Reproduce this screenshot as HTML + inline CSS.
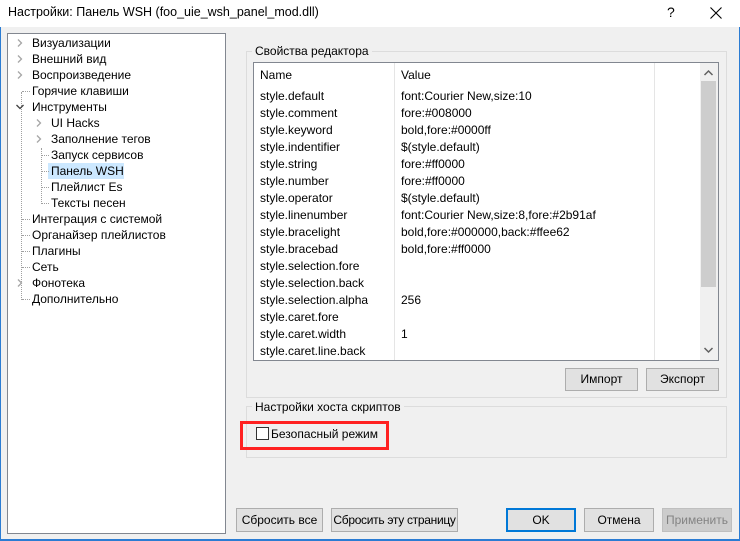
<!DOCTYPE html>
<html style="overflow:hidden;height:541px"><head><meta charset="utf-8"><style>
*{margin:0;padding:0;box-sizing:border-box}
body{width:740px;height:541px;background:#f0f0f0;font-family:"Liberation Sans",sans-serif;font-size:12px;color:#000;position:relative;overflow:hidden}
.a{position:absolute;white-space:nowrap}
.t{position:absolute;white-space:nowrap;line-height:16px}
.btn{position:absolute;background:#e1e1e1;border:1px solid #adadad;text-align:center;line-height:21px;white-space:nowrap;overflow:hidden}
.gb{position:absolute;border:1px solid #dcdcdc}
.row{position:absolute;left:260px;line-height:17px;white-space:nowrap}
.val{position:absolute;left:401px;line-height:17px;white-space:nowrap}
</style></head><body>
<div class="a" style="left:0;top:0;width:740px;height:27px;background:#fff"></div>
<div class="a" style="left:8px;top:5px;font-size:12.5px">Настройки: Панель WSH (foo_uie_wsh_panel_mod.dll)</div>
<div class="a" style="left:667px;top:4px;font-size:14px">?</div>
<svg class="a" style="left:710px;top:7px" width="12" height="12"><path d="M0.5 0.5L11.5 11.5M11.5 0.5L0.5 11.5" stroke="#000" stroke-width="1.1"/></svg>
<div class="a" style="left:0;top:27px;width:1px;height:514px;background:#2b7cd3"></div>
<div class="a" style="left:0;top:539px;width:740px;height:2px;background:#2b7cd3"></div>
<div class="a" style="left:739px;top:27px;width:1px;height:514px;background:#2b7cd3"></div>

<!-- tree -->
<div class="a" style="left:7px;top:33px;width:219px;height:501px;background:#fff;border:1px solid #828790"></div>
<div class="a" style="left:48px;top:163px;width:76px;height:16px;background:#cce8ff"></div>
<div class="a" style="left:21px;top:92px;height:208px;border-left:1px dotted #a0a0a0"></div>
<div class="a" style="left:41px;top:148px;height:56px;border-left:1px dotted #a0a0a0"></div>
<div class="a" style="left:22px;top:91px;width:8px;border-top:1px dotted #a0a0a0"></div>
<div class="a" style="left:22px;top:219px;width:8px;border-top:1px dotted #a0a0a0"></div>
<div class="a" style="left:22px;top:235px;width:8px;border-top:1px dotted #a0a0a0"></div>
<div class="a" style="left:22px;top:251px;width:8px;border-top:1px dotted #a0a0a0"></div>
<div class="a" style="left:22px;top:267px;width:8px;border-top:1px dotted #a0a0a0"></div>
<div class="a" style="left:22px;top:299px;width:8px;border-top:1px dotted #a0a0a0"></div>
<div class="a" style="left:42px;top:155px;width:7px;border-top:1px dotted #a0a0a0"></div>
<div class="a" style="left:42px;top:171px;width:7px;border-top:1px dotted #a0a0a0"></div>
<div class="a" style="left:42px;top:187px;width:7px;border-top:1px dotted #a0a0a0"></div>
<div class="a" style="left:42px;top:203px;width:7px;border-top:1px dotted #a0a0a0"></div>
<svg class="a" style="left:0;top:0" width="60" height="300">
<g fill="none" stroke="#a6a6a6" stroke-width="1.3">
<path d="M18 39.5l3.5 3.5-3.5 3.5M18 55.5l3.5 3.5-3.5 3.5M18 71.5l3.5 3.5-3.5 3.5M18 279.5l3.5 3.5-3.5 3.5M37 119.5l3.5 3.5-3.5 3.5M37 135.5l3.5 3.5-3.5 3.5"/>
<path d="M16.5 105l3.5 3.5 3.5-3.5" stroke="#404040"/>
</g></svg>
<div class="t" style="left:32px;top:35px">Визуализации</div>
<div class="t" style="left:32px;top:51px">Внешний вид</div>
<div class="t" style="left:32px;top:67px">Воспроизведение</div>
<div class="t" style="left:32px;top:83px">Горячие клавиши</div>
<div class="t" style="left:32px;top:99px">Инструменты</div>
<div class="t" style="left:51px;top:115px">UI Hacks</div>
<div class="t" style="left:51px;top:131px">Заполнение тегов</div>
<div class="t" style="left:51px;top:147px">Запуск сервисов</div>
<div class="t" style="left:51px;top:163px">Панель WSH</div>
<div class="t" style="left:51px;top:179px">Плейлист Es</div>
<div class="t" style="left:51px;top:195px">Тексты песен</div>
<div class="t" style="left:32px;top:211px">Интеграция с системой</div>
<div class="t" style="left:32px;top:227px">Органайзер плейлистов</div>
<div class="t" style="left:32px;top:243px">Плагины</div>
<div class="t" style="left:32px;top:259px">Сеть</div>
<div class="t" style="left:32px;top:275px">Фонотека</div>
<div class="t" style="left:32px;top:291px">Дополнительно</div>

<!-- group 1 -->
<div class="gb" style="left:246px;top:51px;width:481px;height:347px"></div>
<div class="a" style="left:252px;top:43px;background:#f0f0f0;padding:0 3px;line-height:16px">Свойства редактора</div>
<div class="a" style="left:253px;top:62px;width:466px;height:299px;background:#fff;border:1px solid #828790"></div>
<div class="a" style="left:394px;top:63px;width:1px;height:297px;background:#e5e5e5"></div>
<div class="a" style="left:654px;top:63px;width:1px;height:297px;background:#e5e5e5"></div>
<div class="a" style="left:700px;top:63px;width:18px;height:297px;background:#f0f0f0"></div>
<div class="a" style="left:701px;top:81px;width:15px;height:206px;background:#cdcdcd"></div>
<svg class="a" style="left:703px;top:69px" width="12" height="8"><path d="M1.5 6l4-4 4 4" fill="none" stroke="#606060" stroke-width="1.5"/></svg>
<svg class="a" style="left:703px;top:346px" width="12" height="8"><path d="M1.5 2l4 4 4-4" fill="none" stroke="#606060" stroke-width="1.5"/></svg>
<div class="row" style="top:67px">Name</div><div class="val" style="top:67px">Value</div>
<div class="row" style="top:88px">style.default</div><div class="val" style="top:88px">font:Courier New,size:10</div>
<div class="row" style="top:105px">style.comment</div><div class="val" style="top:105px">fore:#008000</div>
<div class="row" style="top:122px">style.keyword</div><div class="val" style="top:122px">bold,fore:#0000ff</div>
<div class="row" style="top:139px">style.indentifier</div><div class="val" style="top:139px">$(style.default)</div>
<div class="row" style="top:156px">style.string</div><div class="val" style="top:156px">fore:#ff0000</div>
<div class="row" style="top:173px">style.number</div><div class="val" style="top:173px">fore:#ff0000</div>
<div class="row" style="top:190px">style.operator</div><div class="val" style="top:190px">$(style.default)</div>
<div class="row" style="top:207px">style.linenumber</div><div class="val" style="top:207px">font:Courier New,size:8,fore:#2b91af</div>
<div class="row" style="top:224px">style.bracelight</div><div class="val" style="top:224px">bold,fore:#000000,back:#ffee62</div>
<div class="row" style="top:241px">style.bracebad</div><div class="val" style="top:241px">bold,fore:#ff0000</div>
<div class="row" style="top:258px">style.selection.fore</div>
<div class="row" style="top:275px">style.selection.back</div>
<div class="row" style="top:292px">style.selection.alpha</div><div class="val" style="top:292px">256</div>
<div class="row" style="top:309px">style.caret.fore</div>
<div class="row" style="top:326px">style.caret.width</div><div class="val" style="top:326px">1</div>
<div class="row" style="top:343px">style.caret.line.back</div>
<div class="btn" style="left:565px;top:368px;width:73px;height:23px">Импорт</div>
<div class="btn" style="left:646px;top:368px;width:73px;height:23px">Экспорт</div>

<!-- group 2 -->
<div class="gb" style="left:246px;top:406px;width:481px;height:52px"></div>
<div class="a" style="left:252px;top:399px;background:#f0f0f0;padding:0 3px;line-height:16px">Настройки хоста скриптов</div>
<div class="a" style="left:240px;top:421px;width:149px;height:29px;border:3px solid #ff2121"></div>
<div class="a" style="left:256px;top:427px;width:13px;height:13px;background:#fff;border:1px solid #333"></div>
<div class="a" style="left:271px;top:426px;line-height:16px">Безопасный режим</div>

<!-- bottom buttons -->
<div class="btn" style="left:236px;top:508px;width:87px;height:24px;line-height:22px">Сбросить все</div>
<div class="btn" style="left:331px;top:508px;width:127px;height:24px;line-height:22px;letter-spacing:-0.3px">Сбросить эту страницу</div>
<div class="btn" style="left:506px;top:508px;width:70px;height:24px;line-height:20px;border:2px solid #0078d7">OK</div>
<div class="btn" style="left:584px;top:508px;width:70px;height:24px;line-height:22px">Отмена</div>
<div class="btn" style="left:662px;top:508px;width:70px;height:24px;line-height:22px;background:#cccccc;border-color:#bfbfbf;color:#838383">Применить</div>
</body></html>
